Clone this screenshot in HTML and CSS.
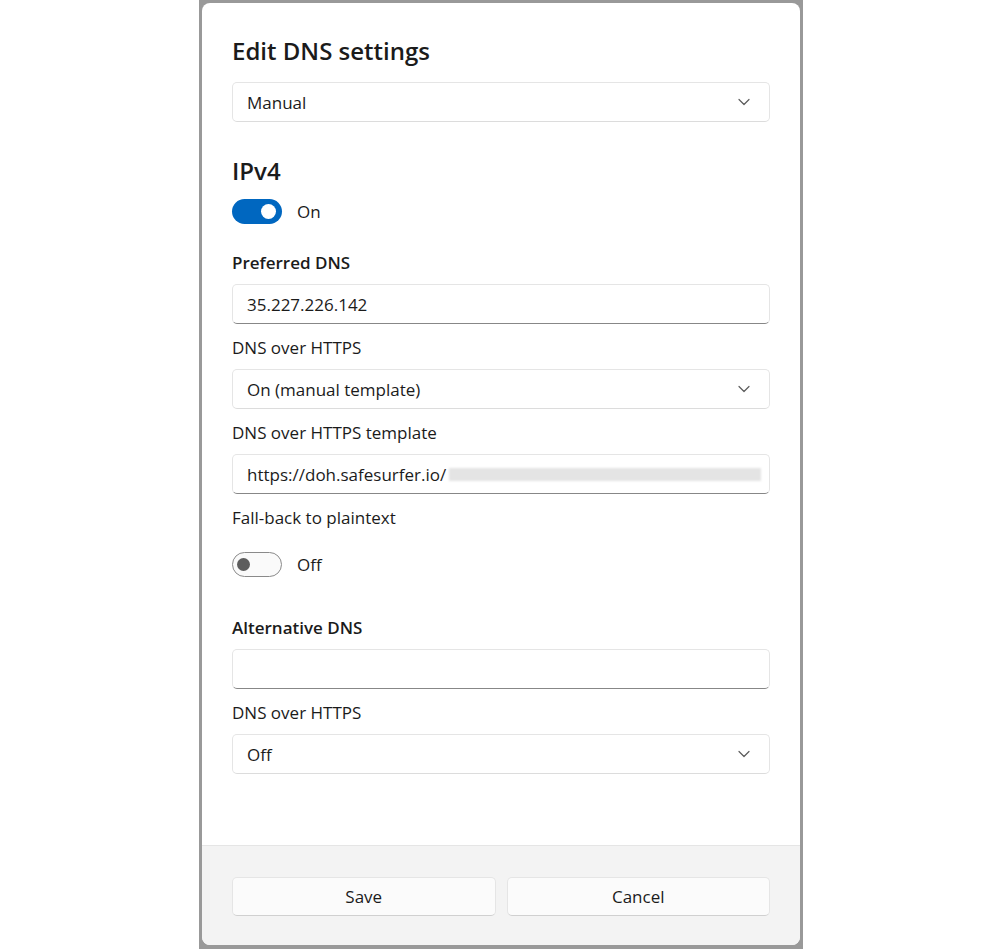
FILE: index.html
```html
<!DOCTYPE html>
<html lang="en">
<head>
<meta charset="utf-8">
<title>Edit DNS settings</title>
<link rel="stylesheet" href="styles.css">
</head>
<body>
<div class="frame">
  <div class="dialog">
    <div class="body">
      <h1 class="title">Edit DNS settings</h1>
      <div class="select first">
        <span>Manual</span>
        <svg class="chev" width="12" height="8" viewBox="0 0 12 8"><path d="M1 1.5 L6 6.5 L11 1.5" fill="none" stroke="#5c5c5c" stroke-width="1.2" stroke-linecap="round" stroke-linejoin="round"/></svg>
      </div>

      <h2 class="section">IPv4</h2>
      <div class="toggle-row on-row">
        <span class="toggle on"><span class="knob"></span></span>
        <span class="toggle-label">On</span>
      </div>

      <div class="label strong pref">Preferred DNS</div>
      <div class="field">35.227.226.142</div>

      <div class="label">DNS over HTTPS</div>
      <div class="select">
        <span>On (manual template)</span>
        <svg class="chev" width="12" height="8" viewBox="0 0 12 8"><path d="M1 1.5 L6 6.5 L11 1.5" fill="none" stroke="#5c5c5c" stroke-width="1.2" stroke-linecap="round" stroke-linejoin="round"/></svg>
      </div>

      <div class="label">DNS over HTTPS template</div>
      <div class="field">
        <span>https://doh.safesurfer.io/</span>
        <span class="blur"></span>
      </div>

      <div class="label">Fall-back to plaintext</div>
      <div class="toggle-row off-row">
        <span class="toggle off"><span class="knob"></span></span>
        <span class="toggle-label">Off</span>
      </div>

      <div class="label strong alt">Alternative DNS</div>
      <div class="field"></div>

      <div class="label">DNS over HTTPS</div>
      <div class="select">
        <span>Off</span>
        <svg class="chev" width="12" height="8" viewBox="0 0 12 8"><path d="M1 1.5 L6 6.5 L11 1.5" fill="none" stroke="#5c5c5c" stroke-width="1.2" stroke-linecap="round" stroke-linejoin="round"/></svg>
      </div>
    </div>
    <div class="footer">
      <button class="btn">Save</button>
      <button class="btn">Cancel</button>
    </div>
  </div>
</div>
</body>
</html>
```
FILE: styles.css
```css
html, body {
  margin: 0;
  padding: 0;
  background: #ffffff;
}
body {
  font-family: "Segoe UI", "Open Sans", sans-serif;
  color: #1b1b1b;
}
.frame {
  width: 604px;
  height: 949px;
  margin-left: 199px;
  box-sizing: border-box;
  padding: 3px 3px 4px 3px;
  background: #999999;
}
.dialog {
  height: 942px;
  background: #ffffff;
  border-radius: 8px;
  overflow: hidden;
  display: flex;
  flex-direction: column;
}
.body {
  flex: 1;
  padding: 32px 30px 0 30px;
  display: flex;
  flex-direction: column;
}
.title {
  margin: 0;
  font-size: 24px;
  line-height: 32px;
  font-weight: 600;
}
.section {
  margin: 33px 0 0 0;
  font-size: 24px;
  line-height: 32px;
  font-weight: 600;
}
.select, .field {
  box-sizing: border-box;
  height: 40px;
  border: 1px solid #e5e5e5;
  border-radius: 5px;
  background: #ffffff;
  display: flex;
  align-items: center;
  padding: 0 8px 0 14px;
  font-size: 17px;
  margin-top: 9px;
}
.select.first {
  margin-top: 15px;
}
.select {
  justify-content: space-between;
  border-bottom-color: #dcdcdc;
  padding-right: 19px;
}
.field {
  border-bottom: 1px solid #878787;
}
.blur {
  flex: 1;
  height: 13px;
  margin-left: 3px;
  background: #e4e4e4;
  filter: blur(1.2px);
}
.label {
  font-size: 17px;
  line-height: 24px;
  margin-top: 12px;
}
.label.strong {
  font-weight: 600;
}
.label.pref {
  margin-top: 27px;
}
.label.alt {
  margin-top: 39px;
}
.toggle-row {
  display: flex;
  align-items: center;
  height: 25px;
  font-size: 17px;
}
.on-row {
  margin-top: 12px;
}
.off-row {
  margin-top: 22px;
}
.toggle {
  box-sizing: border-box;
  width: 50px;
  height: 25px;
  border-radius: 13px;
  display: flex;
  align-items: center;
  margin-right: 15px;
}
.toggle.on {
  background: #0067c0;
  justify-content: flex-end;
  padding-right: 6px;
}
.toggle.on .knob {
  width: 15px;
  height: 15px;
  border-radius: 50%;
  background: #ffffff;
}
.toggle.off {
  border: 1px solid #8a8a8a;
  background: #fafafa;
  padding-left: 4px;
}
.toggle.off .knob {
  width: 13px;
  height: 13px;
  border-radius: 50%;
  background: #5d5d5d;
}
.footer {
  box-sizing: border-box;
  height: 100px;
  background: #f3f3f3;
  border-top: 1px solid #e5e5e5;
  padding: 31px 30px 0 30px;
  display: flex;
  gap: 11px;
  align-items: flex-start;
}
.btn {
  flex: 1;
  height: 39px;
  border: 1px solid #e5e5e5;
  border-bottom-color: #d0d0d0;
  border-radius: 5px;
  background: #fbfbfb;
  font-family: inherit;
  font-size: 17px;
  color: #1b1b1b;
  padding: 0;
}
```
